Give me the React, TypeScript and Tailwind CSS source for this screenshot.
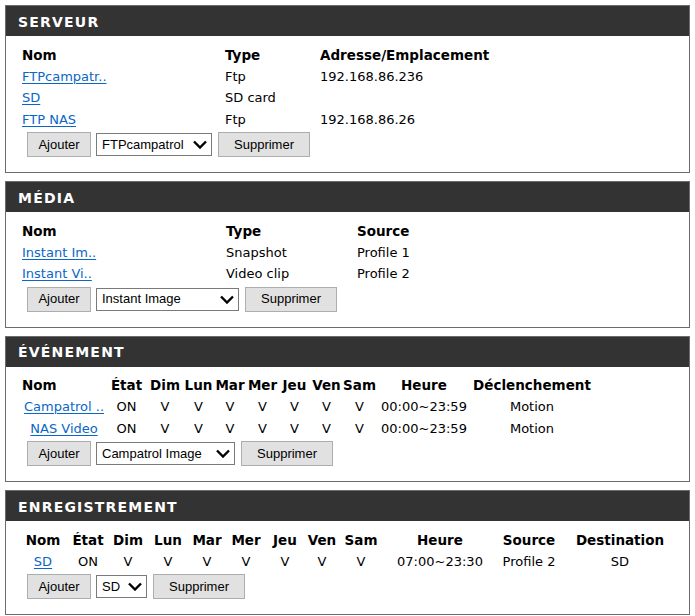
import React from 'react';

const ctl = "font-['Liberation_Sans',Arial,sans-serif] text-[13px] text-black";
const link = 'text-[#0a66c8] underline underline-offset-[2px]';
const th = 'font-bold text-[13.5px]';

function Panel({ title, children }: { title: string; children: React.ReactNode }) {
  return (
    <section className="border border-[#6b6b6b] bg-white">
      <h2 className="flex h-[30px] items-center bg-[#333333] pl-[12px] pt-[2px] text-[14px] font-bold tracking-[1.2px] text-white">
        {title}
      </h2>
      <div className="pb-[15px] pl-[16px] pt-[8px]">{children}</div>
    </section>
  );
}

function Select({ value, width }: { value: string; width: string }) {
  return (
    <div className={`relative h-[23px] ${width}`}>
      <select
        defaultValue={value}
        className={`${ctl} h-full w-full appearance-none border border-[#7a7a7a] bg-white pl-[5px] outline-none`}
      >
        <option>{value}</option>
      </select>
      <svg
        viewBox="0 0 14 9"
        className="pointer-events-none absolute right-[5px] top-[7px] h-[9px] w-[14px]"
      >
        <polyline points="1,1.5 7,7.5 13,1.5" fill="none" stroke="#000" strokeWidth="2.4" />
      </svg>
    </div>
  );
}

function Actions({ value, width }: { value: string; width: string }) {
  return (
    <div className="ml-[5px] mt-[2px] flex h-[25px] items-center gap-[5px]">
      <button className={`${ctl} h-[25px] w-[64px] border border-[#adadad] bg-[#e1e1e1]`}>Ajouter</button>
      <Select value={value} width={width} />
      <button className={`${ctl} ml-px h-[25px] w-[92px] border border-[#adadad] bg-[#e1e1e1]`}>Supprimer</button>
    </div>
  );
}

const days = ['Dim', 'Lun', 'Mar', 'Mer', 'Jeu', 'Ven', 'Sam'];

export default function App() {
  return (
    <div className="flex w-[695px] flex-col gap-2 px-[5px] pt-[5px] font-['DejaVu_Sans',Verdana,sans-serif] text-[13px] text-black">
      <Panel title="SERVEUR">
        <div className="grid grid-cols-[203px_95px_1fr] auto-rows-[21.5px] items-center whitespace-nowrap">
          <div className={th}>Nom</div>
          <div className={th}>Type</div>
          <div className={th}>Adresse/Emplacement</div>
          <div><a href="#" className={link}>FTPcampatr..</a></div>
          <div>Ftp</div>
          <div>192.168.86.236</div>
          <div><a href="#" className={link}>SD</a></div>
          <div>SD card</div>
          <div></div>
          <div><a href="#" className={link}>FTP NAS</a></div>
          <div>Ftp</div>
          <div>192.168.86.26</div>
        </div>
        <Actions value="FTPcampatrol" width="w-[116px]" />
      </Panel>

      <Panel title="MÉDIA">
        <div className="grid grid-cols-[204px_131px_1fr] auto-rows-[21.5px] items-center whitespace-nowrap">
          <div className={th}>Nom</div>
          <div className={th}>Type</div>
          <div className={th}>Source</div>
          <div><a href="#" className={link}>Instant Im..</a></div>
          <div>Snapshot</div>
          <div>Profile 1</div>
          <div><a href="#" className={link}>Instant Vi..</a></div>
          <div>Video clip</div>
          <div>Profile 2</div>
        </div>
        <Actions value="Instant Image" width="w-[143px]" />
      </Panel>

      <Panel title="ÉVÉNEMENT">
        <div className="grid grid-cols-[84px_41px_36px_31px_32px_33px_31px_33px_33px_96px_120px] auto-rows-[21.5px] items-center whitespace-nowrap text-center">
          <div className={`${th} text-left`}>Nom</div>
          <div className={th}>État</div>
          {days.map((d) => (
            <div key={d} className={th}>{d}</div>
          ))}
          <div className={th}>Heure</div>
          <div className={th}>Déclenchement</div>
          {['Campatrol ..', 'NAS Video'].map((n) => (
            <React.Fragment key={n}>
              <div><a href="#" className={link}>{n}</a></div>
              <div>ON</div>
              {days.map((d) => (
                <div key={d}>V</div>
              ))}
              <div>00:00~23:59</div>
              <div>Motion</div>
            </React.Fragment>
          ))}
        </div>
        <Actions value="Campatrol Image" width="w-[139px]" />
      </Panel>

      <Panel title="ENREGISTREMENT">
        <div className="grid grid-cols-[42px_48px_32px_48px_30px_48px_30px_44px_34px_124px_54px_128px] auto-rows-[21.5px] items-center whitespace-nowrap text-center">
          <div className={th}>Nom</div>
          <div className={th}>État</div>
          {days.map((d) => (
            <div key={d} className={th}>{d}</div>
          ))}
          <div className={th}>Heure</div>
          <div className={th}>Source</div>
          <div className={th}>Destination</div>
          <div><a href="#" className={link}>SD</a></div>
          <div>ON</div>
          {days.map((d) => (
            <div key={d}>V</div>
          ))}
          <div>07:00~23:30</div>
          <div>Profile 2</div>
          <div>SD</div>
        </div>
        <Actions value="SD" width="w-[51px]" />
      </Panel>
    </div>
  );
}
